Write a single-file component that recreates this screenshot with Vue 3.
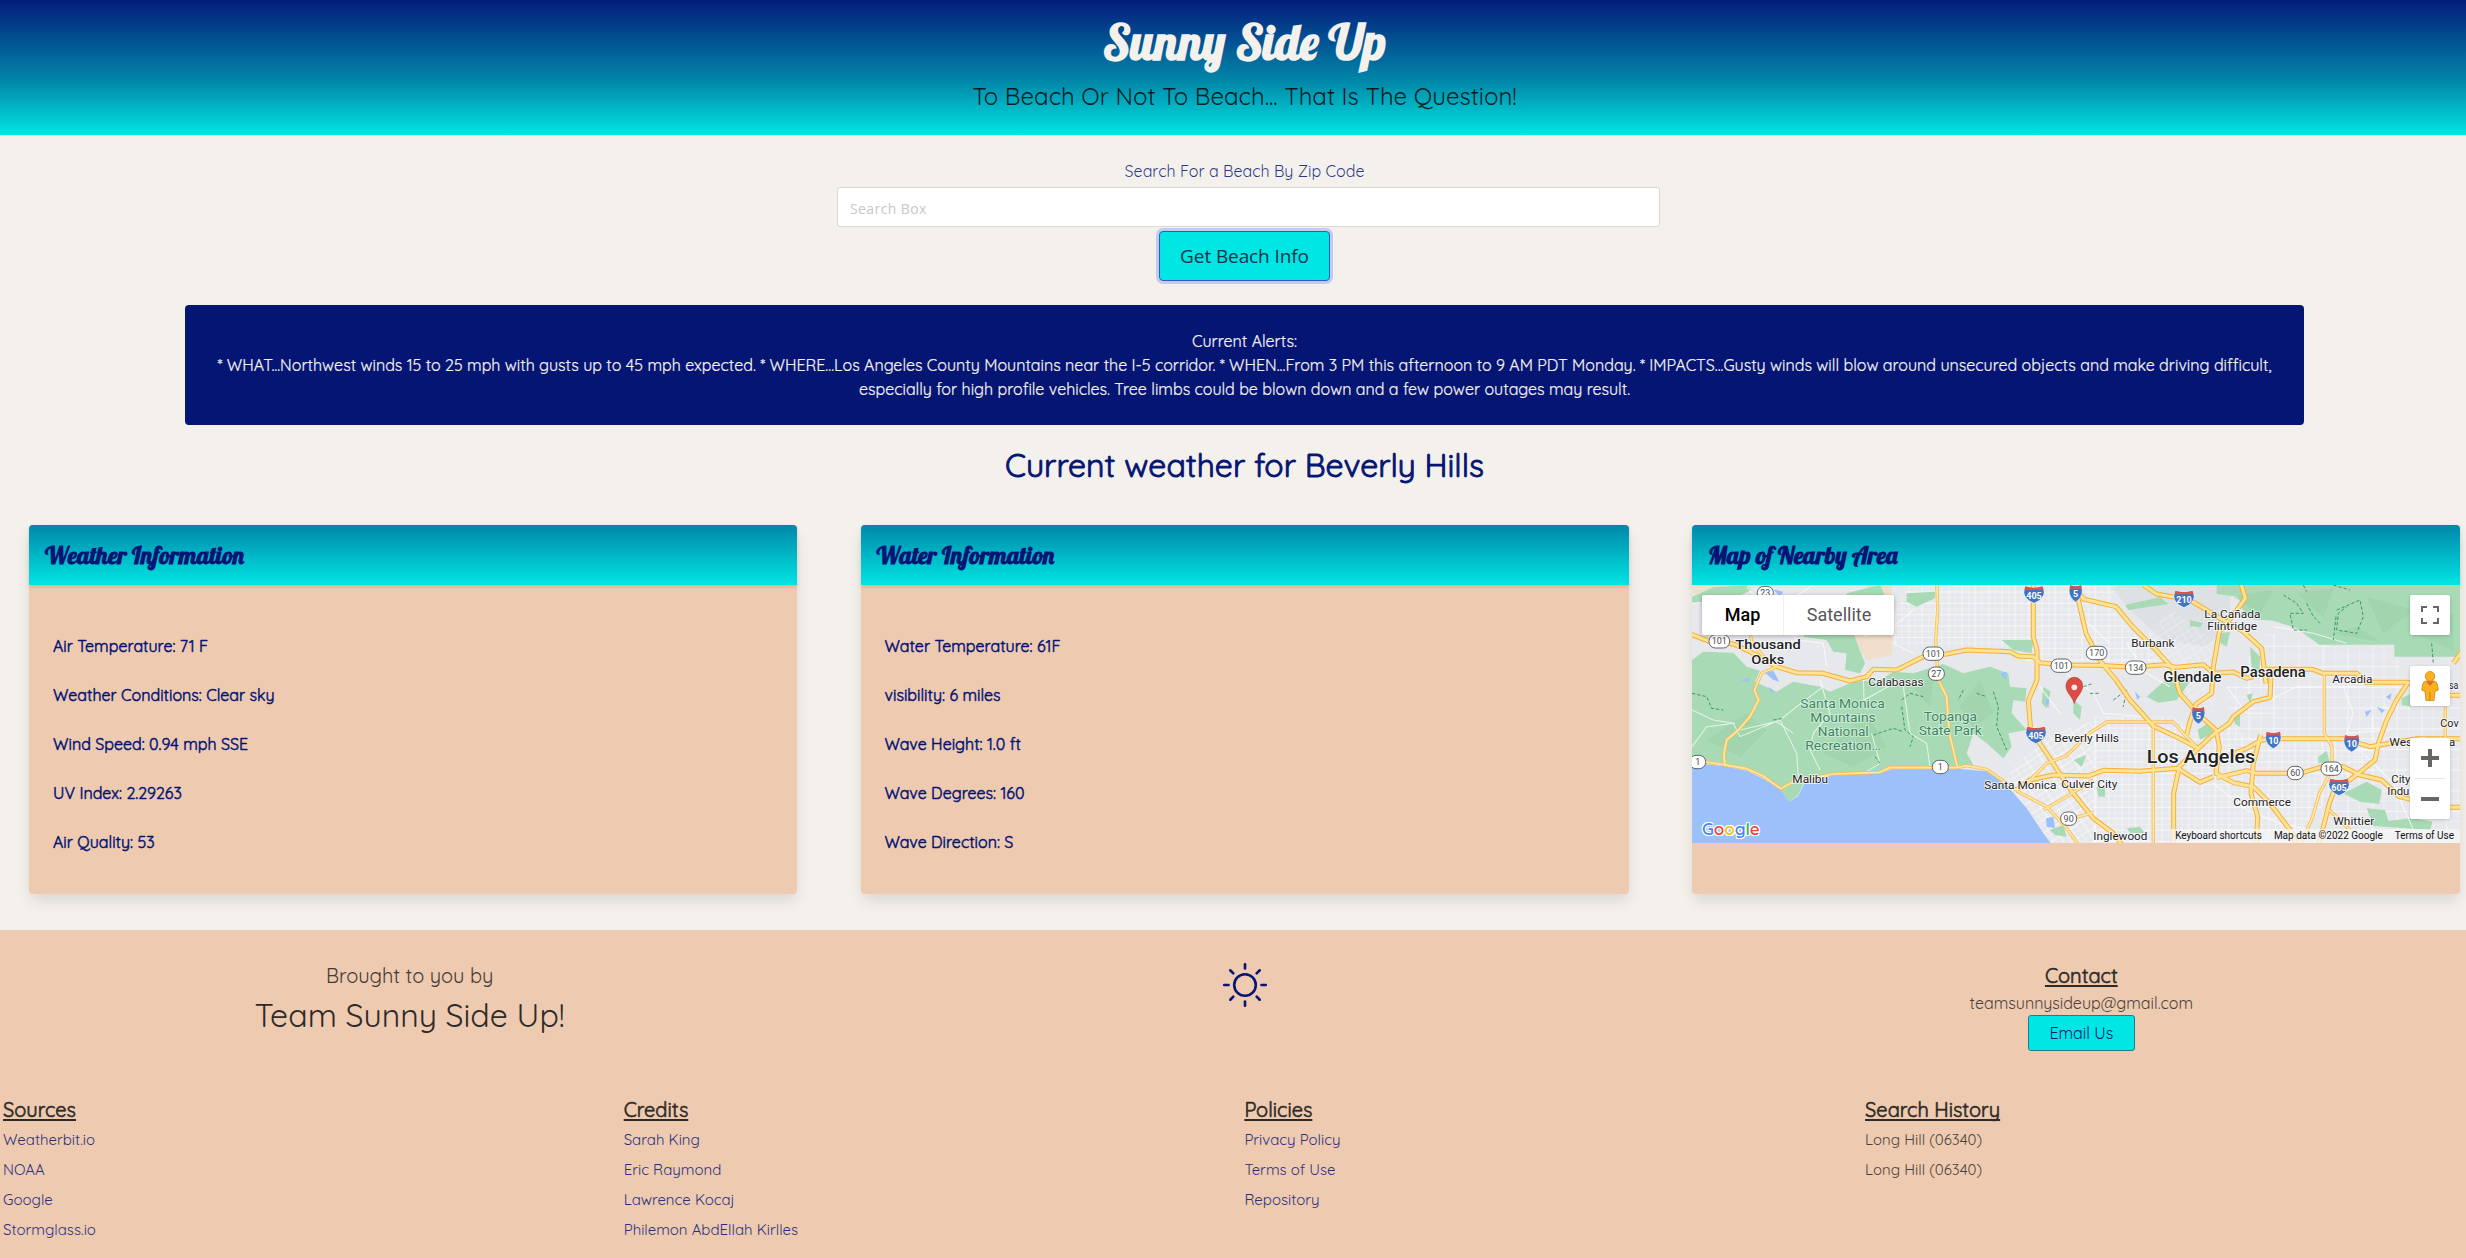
<script setup>
const alertLines = [
  'Current Alerts:',
  '* WHAT...Northwest winds 15 to 25 mph with gusts up to 45 mph expected. * WHERE...Los Angeles County Mountains near the I-5 corridor. * WHEN...From 3 PM this afternoon to 9 AM PDT Monday. * IMPACTS...Gusty winds will blow around unsecured objects and make driving difficult,',
  'especially for high profile vehicles. Tree limbs could be blown down and a few power outages may result.',
]

const panels = [
  {
    title: 'Weather Information',
    rows: [
      'Air Temperature: 71 F',
      'Weather Conditions: Clear sky',
      'Wind Speed: 0.94 mph SSE',
      'UV Index: 2.29263',
      'Air Quality: 53',
    ],
  },
  {
    title: 'Water Information',
    rows: [
      'Water Temperature: 61F',
      'visibility: 6 miles',
      'Wave Height: 1.0 ft',
      'Wave Degrees: 160',
      'Wave Direction: S',
    ],
  },
]

const footerColumns = [
  { title: 'Sources', links: ['Weatherbit.io', 'NOAA', 'Google', 'Stormglass.io'] },
  { title: 'Credits', links: ['Sarah King', 'Eric Raymond', 'Lawrence Kocaj', 'Philemon AbdEllah Kirlles'] },
  { title: 'Policies', links: ['Privacy Policy', 'Terms of Use', 'Repository'] },
  { title: 'Search History', plain: true, links: ['Long Hill (06340)', 'Long Hill (06340)'] },
]

const rays = [0, 45, 90, 135, 180, 225, 270, 315]

const freeways = [
  'M20 398 L90 425 L160 432 L210 455 L290 500 L350 518 L430 520 L510 543 L560 530 L580 508 L650 510 L730 470 L800 462 L860 450 L990 455 L1015 468 L1060 470 L1080 488 L1158 495 L1250 496 L1360 502 L1450 494 L1490 502 L1570 494 L1600 520 L1660 516 L1700 535 L1720 530',
  'M1060 240 V410 L1071 450 V540 L1045 602 L1052 690 L1100 760 L1135 815 L1180 880 L1240 955 L1300 1000 L1330 1040',
  'M1005 872 L1050 840 L1120 825 L1225 828 L1270 811 L1380 814 L1493 805 L1560 847 L1600 830',
  'M1188 262 L1210 297 L1308 320 L1358 380 L1428 450 L1478 505 L1500 580 L1553 640 L1608 690 L1618 740 L1608 820 L1660 848 L1720 860 L1768 908 L1838 1000 L1850 1040',
  'M1195 300 L1218 400 L1263 486 L1308 540 L1350 600 L1420 678 L1498 715 L1555 745 L1598 705 L1648 670 L1660 650 L1720 605 L1770 592 L1773 530',
  'M1390 255 L1430 282 L1530 300 L1620 355 L1690 395 L1745 445 L1758 550',
  'M1680 240 L1696 295 L1660 345 L1618 395 L1600 500 L1595 580 L1548 612 L1530 665 L1520 705',
  'M1755 508 H1898 L1930 520 H2030 L2058 547 H2185 L2150 600 L2120 660 L2095 730 L2085 780 L2035 820 L1960 878 L1948 910 L1915 1040',
  'M1650 765 L1700 745 L1745 720 L1798 716 H1990 L2070 740 L2130 730 L2210 716 H2350',
  'M1610 833 L1700 812 L1730 820 H1860 L1928 800 L1990 800 L2040 825 L2105 840 L2158 890 L2220 905 L2250 922 H2350',
  'M1742 705 L1720 790 L1713 880 L1733 950 L1728 1040',
  'M1555 745 L1498 800 L1481 880 V1040',
  'M2270 586 H2350 M2320 490 L2345 455',
]
const highways = [
  'M770 240 L773 330 L767 420 L775 540 L800 590 L808 700 L832 800',
  'M208 395 L216 425 L250 470 L290 500 L245 520 L223 570 L236 600 L210 650 L175 690 L140 720 L132 760 L134 795',
  'M36 780 L130 794 L200 806 L250 828 L302 866 L340 845 L460 822 L600 817 L628 803 L830 803 L860 797 L920 808 L980 850 L1020 878 L1100 920 L1160 985 L1200 1040',
  'M1420 668 V1040',
  'M1933 520 V700 L1956 740 V810 L1918 880 L1898 950 L1860 1040',
  'M1040 850 L1100 790 L1158 768 L1228 700 L1280 666 H1480 L1510 700 L1555 745',
  'M1090 930 L1160 890 L1240 840 M1160 960 L1240 938 M2296 620 V716 M1948 930 L2010 990',
]
const locals = [
  'M200 260 L260 330 L330 300 L400 255 M300 345 L350 420 L430 430 L440 500 M36 310 L120 300 L200 330 M550 410 L640 380 L700 330 M640 430 L700 460',
  'M36 630 L100 660 L160 670 L180 710 L300 660 L350 620 L430 560 M300 660 L350 760 L355 830 M420 540 L450 640 L400 700 L390 750 L420 810 M550 520 L552 600 L660 540 M575 700 L600 790 L560 815 M670 560 L690 700 L740 730 L750 800 M180 690 L290 665 L340 700 M36 740 L80 680 L165 670',
  'M1080 560 L1140 640 M1158 520 L1240 580 L1270 640 L1400 650 M1340 430 L1400 520 L1470 560 M1640 560 L1700 640 L1780 640 M1770 600 L1850 560 H2050',
  'M1190 340 L1290 430 M1780 380 L1900 400 L2000 430 M1990 560 L2020 640 L2000 700 L2130 690 M2050 760 L2140 850 L2200 990 M1600 850 L1700 930 L1800 970 L1980 1010',
]
const trails = [
  'M36 580 L80 590 L95 625 L130 630 M280 660 L310 655 M665 600 L690 580 L730 590 M665 620 L675 690 L700 710 L690 740 M580 705 L640 685 L670 695 M850 570 L835 600 M940 575 L955 620 L950 680 L980 750 M890 580 L920 590 M585 770 L600 790',
  'M1810 285 L1850 310 L1870 340 L1830 340 L1840 390 L1880 390 M1880 310 L1900 350 L1920 370 M1970 330 L2040 300 L2050 350 L2030 400 L1970 390 L1975 340 L2000 320 M1968 350 L1960 420 M2255 430 L2260 490 M1870 255 L1880 275 M1960 255 L2010 270',
  'M1210 560 L1240 550 M1230 580 L1260 580 M1300 600 L1340 570 L1330 620',
]

const interstates = [
  { n: '405', x: 1062, y: 284 },
  { n: '5', x: 1187, y: 280 },
  { n: '405', x: 1068, y: 705 },
  { n: '210', x: 1512, y: 297 },
  { n: '5', x: 1555, y: 646 },
  { n: '10', x: 1780, y: 720 },
  { n: '10', x: 2015, y: 730 },
  { n: '605', x: 1977, y: 861 },
]
const routes = [
  { n: '23', x: 256, y: 279 },
  { n: '101', x: 118, y: 424 },
  { n: '101', x: 760, y: 461 },
  { n: '27', x: 769, y: 521 },
  { n: '101', x: 1144, y: 497 },
  { n: '1', x: 53, y: 786 },
  { n: '1', x: 781, y: 801 },
  { n: '90', x: 1166, y: 956 },
  { n: '170', x: 1250, y: 459 },
  { n: '134', x: 1367, y: 503 },
  { n: '60', x: 1846, y: 819 },
  { n: '164', x: 1954, y: 806 },
]
const places = [
  { t: 'Thousand', x: 166, y: 447, w: 196, s: 40, c: 'town' },
  { t: 'Oaks', x: 214, y: 492, w: 99, s: 40, c: 'town' },
  { t: 'Calabasas', x: 565, y: 559, w: 166, s: 35 },
  { t: 'Malibu', x: 337, y: 849, w: 107, s: 35 },
  { t: 'Santa Monica', x: 913, y: 867, w: 216, s: 35 },
  { t: 'Culver City', x: 1144, y: 865, w: 168, s: 35 },
  { t: 'Beverly Hills', x: 1123, y: 727, w: 194, s: 35 },
  { t: 'Burbank', x: 1354, y: 441, w: 129, s: 35 },
  { t: 'La Cañada', x: 1573, y: 354, w: 168, s: 35 },
  { t: 'Flintridge', x: 1582, y: 391, w: 149, s: 35 },
  { t: 'Glendale', x: 1450, y: 546, w: 174, s: 42, c: 'town' },
  { t: 'Pasadena', x: 1681, y: 532, w: 196, s: 42, c: 'town' },
  { t: 'Arcadia', x: 1957, y: 549, w: 120, s: 35 },
  { t: 'Los Angeles', x: 1400, y: 789, w: 326, s: 57, c: 'town' },
  { t: 'Commerce', x: 1660, y: 919, w: 173, s: 35 },
  { t: 'Whittier', x: 1960, y: 976, w: 123, s: 35 },
  { t: 'Inglewood', x: 1240, y: 1020, w: 162, s: 35 },
  { t: 'West Covina', x: 2128, y: 738, w: 198, s: 35 },
  { t: 'City', x: 2134, y: 849, w: 57, s: 35 },
  { t: 'Indu', x: 2122, y: 885, w: 66, s: 35 },
  { t: 'sa', x: 2307, y: 567, w: 28, s: 33 },
  { t: 'Cov', x: 2281, y: 682, w: 55, s: 35 },
  { t: 'Santa Monica', x: 361, y: 623, w: 253, s: 40, c: 'park' },
  { t: 'Mountains', x: 391, y: 666, w: 196, s: 40, c: 'park' },
  { t: 'National', x: 413, y: 708, w: 153, s: 40, c: 'park' },
  { t: 'Recreation…', x: 376, y: 750, w: 226, s: 40, c: 'park' },
  { t: 'Topanga', x: 731, y: 663, w: 160, s: 40, c: 'park' },
  { t: 'State Park', x: 716, y: 705, w: 189, s: 40, c: 'park' },
]
</script>

<template>
  <div class="page">
    <header class="hero">
      <h1>Sunny Side Up</h1>
      <p>To Beach Or Not To Beach... That Is The Question!</p>
    </header>

    <main>
      <section class="search">
        <label for="zip">Search For a Beach By Zip Code</label>
        <input id="zip" type="text" placeholder="Search Box" />
        <button type="button">Get Beach Info</button>
      </section>

      <section class="alerts">
        <div v-for="line in alertLines" :key="line">{{ line }}</div>
      </section>

      <h2>Current weather for Beverly Hills</h2>

      <section class="cards">
        <article v-for="panel in panels" :key="panel.title" class="card">
          <h3>{{ panel.title }}</h3>
          <div class="rows">
            <p v-for="row in panel.rows" :key="row">{{ row }}</p>
          </div>
        </article>

        <article class="card">
          <h3>Map of Nearby Area</h3>
          <div class="map">
            <svg class="canvas" viewBox="36 255 2304 774" preserveAspectRatio="none">
              <defs>
                <pattern id="grid" width="40" height="34" patternUnits="userSpaceOnUse">
                  <path d="M0 4 H40 M6 0 V34" class="street" />
                  <path d="M0 21 H40 M26 0 V34" class="street thin" />
                </pattern>
                <pattern id="slant" width="40" height="34" patternUnits="userSpaceOnUse" patternTransform="rotate(-33)">
                  <path d="M0 4 H40 M6 0 V34" class="street" />
                  <path d="M0 21 H40 M26 0 V34" class="street thin" />
                </pattern>
                <pattern id="wide" width="74" height="62" patternUnits="userSpaceOnUse">
                  <path d="M0 4 H74 M6 0 V62" class="street" />
                  <path d="M0 34 H74 M40 0 V62" class="street thin" />
                </pattern>
              </defs>
              <rect x="36" y="255" width="2304" height="774" fill="#e6e8ec" />
              <path d="M1290 255 H1650 V360 L1580 440 L1450 420 L1350 330Z" fill="#dee1e4" />
              <path d="M36 255 H140 L60 280 H36Z M510 400 L640 370 L635 465 L560 480 L530 430Z M560 255 H635 V290 L560 300Z" fill="#f0decb" />

              <path d="M640 340 L690 255 H1310 L1290 320 L1400 440 L1440 490 L1060 500 L990 440 H690 L640 430Z" fill="url(#grid)" />
              <path d="M1240 650 H1480 L1560 700 L1640 680 L1740 720 H2100 L2050 800 L1940 900 L1850 1029 H1240Z" fill="url(#grid)" />
              <path d="M1010 790 L1120 700 L1250 660 V1029 H1112 L980 840Z" fill="url(#slant)" />
              <path d="M1760 400 L1960 440 H2140 L2180 560 L2090 720 H1660 L1640 560Z" fill="url(#wide)" />
              <path d="M2100 600 H2340 V1029 H1860 L1960 900Z" fill="url(#wide)" />
              <path d="M1480 330 L1620 440 L1600 640 L1500 600 L1380 420Z" fill="url(#slant)" opacity="0.5" />

              <g fill="#a8dab5">
                <path d="M36 480 L70 455 L160 458 L200 500 L240 512 L225 545 L290 575 L340 545 L420 560 L450 575 L520 545 L600 540 L640 515 L700 520 L790 492 L850 520 L930 500 L985 520 L990 560 L1040 565 L1035 605 L1000 600 L995 640 L1040 690 L985 700 L995 740 L970 775 L920 730 L880 700 L860 760 L880 795 L830 800 L640 803 L600 818 L450 825 L370 850 L355 885 L328 905 L300 870 L250 832 L200 808 L130 796 L36 790Z" />
                <path d="M36 290 L100 262 L200 255 L215 270 L130 310 L36 308Z M500 280 L600 255 L620 300 L520 400 L555 490 L540 520 L495 510 L500 460 L460 455 L440 420 L370 410 L390 385 L470 400Z" />
                <path d="M680 280 L765 275 V295 L710 320 L680 305Z M965 420 H1060 L1055 460 L1000 450Z M1090 560 L1112 575 L1100 625 L1085 610Z M1180 600 L1205 620 L1200 660 L1180 640Z M1110 990 L1150 975 L1160 1010 L1125 1005Z" />
                <path d="M1610 255 H2340 V470 H2143 V434 H1918 L1850 385 L1780 362 L1720 358 L1690 335 L1675 290 L1610 282Z" />
                <path d="M1400 590 L1450 545 L1500 530 L1530 545 L1490 600 L1435 608Z M1335 315 L1440 292 L1465 312 L1345 330Z M1530 360 L1570 370 L1560 382 L1530 378Z M1620 400 L1650 395 L1640 440 L1622 430Z M1710 440 L1740 470 L1738 520 L1715 500Z" />
                <path d="M1553 690 L1590 665 L1600 700 L1560 720Z M1660 650 L1680 640 V680 L1665 672Z M1700 585 L1718 580 L1710 610Z M1915 770 L1940 752 L1950 790 L1915 790Z" />
                <path d="M1990 880 L2060 845 L2105 870 L2098 912 L2040 905Z M2060 925 L2115 930 L2125 962 L2200 955 L2258 965 L2250 990 L2080 978Z M2165 595 L2195 580 V620 L2165 615Z M1340 985 L1380 980 L1395 1000 L1350 998Z M1250 860 H1275 V890 H1255Z M1180 780 L1220 765 L1205 800Z" />
              </g>
              <g fill="#97d0a7" opacity="0.5">
                <path d="M80 720 L200 640 L260 690 L180 770Z M430 760 L560 640 L620 740 L520 800Z M700 560 L760 530 L750 620Z M840 620 L900 540 L940 640 L880 680Z" />
                <path d="M1660 290 L1780 270 L1740 340Z M1850 280 L1960 265 L1930 350Z M2060 290 L2200 330 L2110 400Z M1960 400 L2030 380 L2100 425Z M2200 400 L2320 340 V450Z" />
              </g>
              <path d="M36 790 L130 798 L200 812 L250 836 L300 868 L328 905 L355 888 L372 852 L450 826 L600 820 L640 806 L830 806 L920 814 L980 856 L1040 925 L1090 1000 L1112 1029 H36Z" fill="#9cc0f9" />
              <g fill="#9cc0f9">
                <path d="M255 518 L280 512 L298 545 L280 540Z M180 540 L210 535 L205 546Z M265 560 L282 572 L275 580Z M280 268 L310 275 L300 290Z M960 520 L980 515 L978 540Z M1095 600 L1108 595 L1105 625Z M1098 955 L1120 950 L1125 985 L1100 980Z" />
                <path d="M2055 635 L2075 630 L2060 650Z M2090 620 L2115 630 L2105 640Z M2118 590 L2135 580 L2130 600Z M1365 575 L1372 600 L1380 590Z" />
              </g>

              <path v-for="d in locals" :key="d" :d="d" class="local" />
              <path v-for="d in trails" :key="d" :d="d" class="trail" />
              <path v-for="d in highways" :key="'hc' + d" :d="d" class="highway-case" />
              <path v-for="d in freeways" :key="'fc' + d" :d="d" class="freeway-case" />
              <path v-for="d in highways" :key="'hf' + d" :d="d" class="highway-fill" />
              <path v-for="d in freeways" :key="'ff' + d" :d="d" class="freeway-fill" />

              <g v-for="r in routes" :key="r.n + r.x" :transform="`translate(${r.x} ${r.y})`">
                <rect
                  :x="r.n.length > 2 ? -31 : -24"
                  y="-20"
                  :width="r.n.length > 2 ? 62 : 48"
                  height="40"
                  rx="19"
                  fill="#fff"
                  stroke="#5f6368"
                  stroke-width="3"
                />
                <text class="route" y="9">{{ r.n }}</text>
              </g>
              <g v-for="i in interstates" :key="i.n + i.x + i.y" :transform="`translate(${i.x} ${i.y})`">
                <g :transform="`scale(${i.n.length > 2 ? 1 : i.n.length > 1 ? 0.76 : 0.64} 1)`">
                  <path d="M-26 -24 Q0 -18 26 -24 L31 -8 Q30 14 0 26 Q-30 14 -31 -8Z" fill="#3f74c8" stroke="#fff" stroke-width="2" />
                  <path d="M-26 -25 Q0 -17 26 -25 L29 -14 H-29Z" fill="#d9534f" />
                </g>
                <text class="interstate" y="12">{{ i.n }}</text>
              </g>

              <text
                v-for="p in places"
                :key="p.t + p.x"
                :x="p.x"
                :y="p.y"
                :textLength="p.w"
                :font-size="p.s"
                lengthAdjust="spacingAndGlyphs"
                :class="['place', p.c]"
              >{{ p.t }}</text>

              <path d="M1183 610 C1178 590 1158 578 1158 557 A25 25 0 0 1 1208 557 C1208 578 1188 590 1183 610Z" fill="#dd4b43" stroke="#b93a34" stroke-width="2" />
              <circle cx="1183" cy="562" r="8.500" fill="#fff" opacity="0.9" />
            </svg>

            <div class="type-switch"><b>Map</b><span>Satellite</span></div>
            <div class="logo"><i class="blue">G</i><i class="red">o</i><i class="yellow">o</i><i class="blue">g</i><i class="green">l</i><i class="red">e</i></div>
            <div class="control fullscreen">
              <svg width="18" height="18" viewBox="0 0 18 18"><path d="M1 6 V1 H6 M12 1 H17 V6 M17 12 V17 H12 M6 17 H1 V12" fill="none" stroke="#666" stroke-width="2" /></svg>
            </div>
            <div class="control pegman">
              <svg width="18" height="30" viewBox="0 0 18 30">
                <path d="M5 10 H13 Q16 10.500 16.500 14 L17.300 19 L14 20.500 L13 29.500 H5 L4 20.500 L0.700 19 L1.500 14 Q2 10.500 5 10Z" fill="#f9b21d" stroke="#c98318" stroke-width="0.8" />
                <path d="M5 10.300 H13 L9 15Z" fill="#e0682c" />
                <path d="M9 21 V29.500" stroke="#c98318" />
                <circle cx="9" cy="5.300" r="4.800" fill="#f9b21d" stroke="#c98318" stroke-width="0.800" />
              </svg>
            </div>
            <div class="control zoom">
              <svg width="40" height="81" viewBox="0 0 40 81">
                <path d="M11 20 H29 M20 11 V29 M11 61 H29" stroke="#666" stroke-width="4" />
                <path d="M5 40.500 H35" stroke="#e6e6e6" />
              </svg>
            </div>
            <div class="attribution"><span>Keyboard shortcuts</span><span>Map data ©2022 Google</span><span>Terms of Use</span></div>
          </div>
        </article>
      </section>
    </main>

    <footer>
      <div class="brand-row">
        <div class="brand">
          <p class="by">Brought to you by</p>
          <p class="team">Team Sunny Side Up!</p>
        </div>
        <div class="sun">
          <svg width="46" height="46" viewBox="-23 -23 46 46">
            <g fill="none" stroke="#041574" stroke-width="2.6" stroke-linecap="round">
              <circle r="10.800" />
              <path v-for="a in rays" :key="a" d="M0 -16.500 V-20.800" :transform="`rotate(${a})`" />
            </g>
          </svg>
        </div>
        <div class="contact">
          <h4>Contact</h4>
          <p>teamsunnysideup@gmail.com</p>
          <button type="button">Email Us</button>
        </div>
      </div>
      <div class="columns">
        <div v-for="col in footerColumns" :key="col.title" :class="{ plain: col.plain }">
          <h4>{{ col.title }}</h4>
          <p v-for="(link, i) in col.links" :key="i">{{ link }}</p>
        </div>
      </div>
    </footer>
  </div>
</template>

<style>
html,
body {
  overflow: hidden;
  background: #f4f1ec;
}
</style>

<style scoped>
.page {
  width: 2489px;
  height: 1258px;
  overflow: hidden;
  font: 400 16px/24px Quicksand, Lato, sans-serif;
  color: #041574;
  background: #f4f1ec;
}
h1, h2, h3, h4, p {
  margin: 0;
}
.hero {
  height: 135px;
  text-align: center;
  background: linear-gradient(#041c7c, #0187a9 60%, #00e5e2);
}
h1 {
  font: 700 48px/84px Lobster, "Liberation Serif", serif;
  color: #f4f1ec;
}
.hero p {
  font-size: 24px;
  line-height: 24px;
  color: rgba(10, 10, 10, 0.88);
}
.search {
  display: flex;
  flex-direction: column;
  align-items: center;
  gap: 4px;
  padding-top: 24px;
}
.search label {
  color: rgba(4, 21, 116, 0.85);
}
.search input {
  box-sizing: border-box;
  width: 823px;
  height: 40px;
  margin-left: 8px;
  padding: 3px 12px 0;
  border: 1px solid #dbd8d5;
  border-radius: 3px;
  font: 14px "Open Sans", sans-serif;
  letter-spacing: 0.4px;
}
.search input::placeholder {
  color: #c8c8c8;
  opacity: 1;
}
.search button {
  width: 171px;
  height: 50px;
  padding: 0;
  border: 1px solid #2a5fbf;
  border-radius: 4px;
  font: 19px "Open Sans", sans-serif;
  letter-spacing: -0.1px;
  color: #12324c;
  background: #00e6e3;
  box-shadow: 0 0 0 3px #c5c9ee;
}
.alerts {
  box-sizing: border-box;
  width: 2119px;
  height: 120px;
  margin: 24px auto 0;
  padding: 24px 0;
  border-radius: 4px;
  text-align: center;
  white-space: nowrap;
  color: #f4f1ec;
  background: #041574;
  -webkit-text-stroke: 0.2px;
}
h2 {
  margin: 16px 0 36px;
  font-size: 32px;
  font-weight: 400;
  line-height: 48px;
  text-align: center;
  -webkit-text-stroke: 0.9px;
}
.cards {
  display: grid;
  grid-template-columns: repeat(3, 768px);
  gap: 63.5px;
  padding-left: 29px;
}
.card {
  height: 369px;
  border-radius: 4px;
  background: #eecab1;
  box-shadow: 0 8px 16px -2px rgba(10, 10, 10, 0.12);
}
h3 {
  height: 60px;
  padding-left: 16px;
  border-radius: 4px 4px 0 0;
  font: 700 24px/60px Lobster, "Liberation Serif", serif;
  background: linear-gradient(#0187a9, #00e5e2);
  box-shadow: 0 2px 4px rgba(10, 10, 10, 0.12);
}
.rows {
  display: flex;
  flex-direction: column;
  gap: 25px;
  padding: 49px 24px 0;
  -webkit-text-stroke: 0.5px;
}
.map {
  position: relative;
  height: 258px;
  overflow: hidden;
  font-family: Roboto, sans-serif;
}
.canvas {
  display: block;
  width: 768px;
  height: 258px;
}
.street {
  fill: none;
  stroke: #fff;
  stroke-width: 2.4;
  opacity: 0.8;
}
.street.thin {
  stroke-width: 1.5;
  opacity: 0.6;
}
.local {
  fill: none;
  stroke: #fff;
  stroke-width: 3.2;
  opacity: 0.7;
}
.trail {
  fill: none;
  stroke: #3a9a5f;
  stroke-width: 3;
  stroke-dasharray: 10 6;
}
.freeway-case, .highway-case, .freeway-fill, .highway-fill {
  fill: none;
  stroke-linejoin: round;
}
.freeway-case {
  stroke: #f6ae3a;
  stroke-width: 15;
}
.freeway-fill {
  stroke: #fde394;
  stroke-width: 9;
}
.highway-case {
  stroke: #f8bd57;
  stroke-width: 10;
}
.highway-fill {
  stroke: #fde8a6;
  stroke-width: 5;
}
.route, .interstate {
  text-anchor: middle;
  font-size: 27px;
  fill: #4a4e52;
}
.interstate {
  font-weight: 700;
  fill: #fff;
}
.place {
  fill: #202124;
  stroke: #fff;
  stroke-width: 5;
  stroke-opacity: 0.85;
  paint-order: stroke;
}
.place.town {
  font-weight: 500;
}
.place.park {
  fill: #3d8560;
  stroke: #dff3e5;
}
.type-switch {
  position: absolute;
  top: 10px;
  left: 10px;
  display: grid;
  grid-template-columns: 82px 110px;
  height: 40px;
  border-radius: 2px;
  font-size: 18px;
  line-height: 40px;
  text-align: center;
  color: #565656;
  background: #fff;
  box-shadow: 0 1px 4px rgba(0, 0, 0, 0.3);
}
.type-switch b {
  font-weight: 500;
  color: #000;
  border-right: 1px solid #eee;
}
.logo {
  position: absolute;
  left: 10px;
  bottom: 3px;
  font: 600 17px/22px Quicksand, Lato, sans-serif;
  text-shadow: 0 0 1px #fff, 0 0 2px #fff, 1px 1px 0 #fff, -1px -1px 0 #fff, 1px -1px 0 #fff, -1px 1px 0 #fff;
}
.logo i { font-style: normal; }
.blue { color: #4285f4; }
.red { color: #ea4335; }
.yellow { color: #fbbc04; }
.green { color: #34a853; }
.control {
  position: absolute;
  right: 10px;
  display: flex;
  align-items: center;
  justify-content: center;
  width: 40px;
  height: 40px;
  border-radius: 2px;
  background: #fff;
  box-shadow: 0 1px 4px -1px rgba(0, 0, 0, 0.3);
}
.fullscreen { top: 10px; }
.pegman { top: 81px; }
.zoom {
  top: 153px;
  height: 81px;
}
.attribution {
  position: absolute;
  right: 0;
  bottom: 0;
  display: flex;
  gap: 12px;
  padding: 0 6px 0 4px;
  font-size: 10px;
  line-height: 14px;
  color: #111;
  background: rgba(245, 245, 245, 0.75);
}
footer {
  width: 2491px;
  height: 328px;
  margin-top: 36px;
  color: #2e2a28;
  background: #eecab1;
}
.brand-row {
  display: grid;
  grid-template-columns: repeat(3, 1fr);
  gap: 16.5px;
  height: 134px;
  padding-top: 31px;
  text-align: center;
}
.by {
  font-size: 20px;
  line-height: 30px;
  opacity: 0.9;
}
.team {
  margin-top: 5px;
  font-size: 32px;
  line-height: 38px;
}
.sun {
  padding-top: 1px;
}
h4 {
  font-size: 20px;
  font-weight: 400;
  line-height: 30px;
  text-decoration: underline;
  text-decoration-skip-ink: none;
  text-decoration-thickness: 1.5px;
  text-underline-offset: 2px;
  -webkit-text-stroke: 0.6px;
}
.contact p {
  opacity: 0.85;
}
.contact button {
  display: block;
  width: 107px;
  height: 36px;
  margin: 0 auto;
  padding: 0;
  border: 1px solid #1b7e94;
  border-radius: 3px;
  font: 400 16px Quicksand, Lato, sans-serif;
  color: #041574;
  background: #00e6e3;
}
.columns {
  display: grid;
  grid-template-columns: repeat(4, 620.7px);
  padding-left: 3px;
}
.columns p {
  font-size: 15px;
  line-height: 30px;
  color: #041574;
  opacity: 0.85;
}
.columns .plain p {
  color: #2e2a28;
}
</style>
